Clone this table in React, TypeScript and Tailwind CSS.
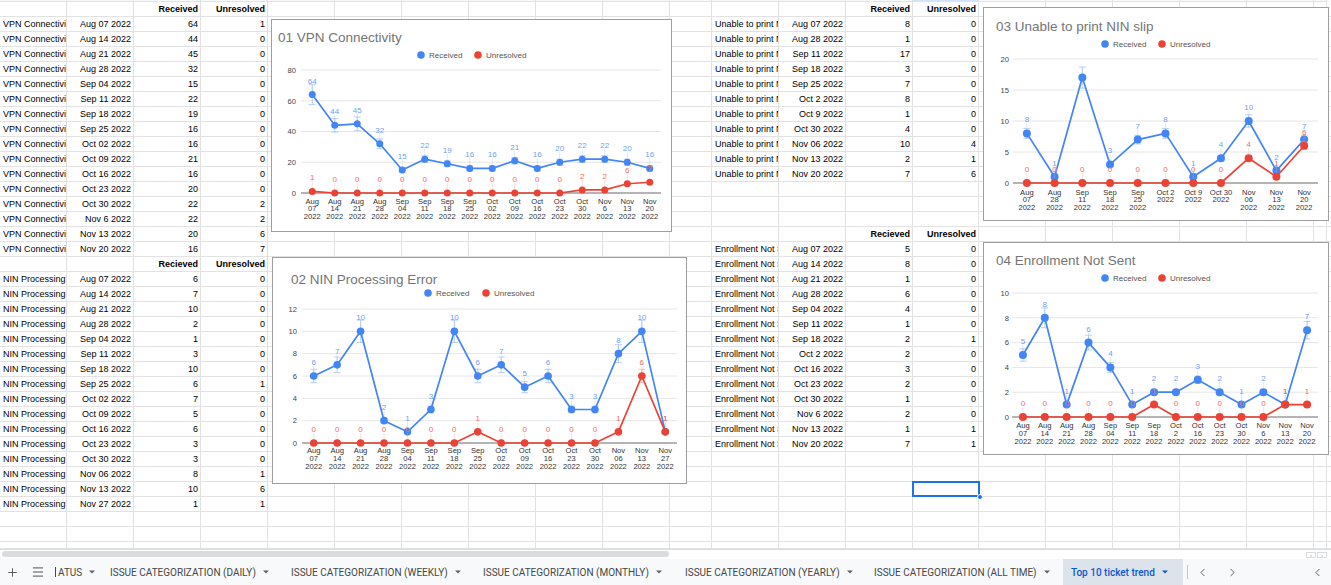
import { Plus, Menu, ChevronLeft, ChevronRight } from "lucide-react";

const COLS = [67, 67, 67, 67, 67, 67, 67, 67, 67, 67, 42, 67, 67, 67, 66, 67, 67, 67, 67, 67, 13];
const W: Record<number, string> = { 67: "w-[67px]", 42: "w-[42px]", 66: "w-[66px]", 13: "w-[13px]" };

type Cell = { t: string; a: "l" | "r"; b: boolean };

const vpn = {
  dates: ["Aug 07 2022", "Aug 14 2022", "Aug 21 2022", "Aug 28 2022", "Sep 04 2022", "Sep 11 2022", "Sep 18 2022", "Sep 25 2022", "Oct 02 2022", "Oct 09 2022", "Oct 16 2022", "Oct 23 2022", "Oct 30 2022", "Nov 6 2022", "Nov 13 2022", "Nov 20 2022"],
  rec: [64, 44, 45, 32, 15, 22, 19, 16, 16, 21, 16, 20, 22, 22, 20, 16],
  unr: [1, 0, 0, 0, 0, 0, 0, 0, 0, 0, 0, 0, 2, 2, 6, 7],
};
const nin = {
  dates: ["Aug 07 2022", "Aug 14 2022", "Aug 21 2022", "Aug 28 2022", "Sep 04 2022", "Sep 11 2022", "Sep 18 2022", "Sep 25 2022", "Oct 02 2022", "Oct 09 2022", "Oct 16 2022", "Oct 23 2022", "Oct 30 2022", "Nov 06 2022", "Nov 13 2022", "Nov 27 2022"],
  rec: [6, 7, 10, 2, 1, 3, 10, 6, 7, 5, 6, 3, 3, 8, 10, 1],
  unr: [0, 0, 0, 0, 0, 0, 0, 1, 0, 0, 0, 0, 0, 1, 6, 1],
};
const slip = {
  dates: ["Aug 07 2022", "Aug 28 2022", "Sep 11 2022", "Sep 18 2022", "Sep 25 2022", "Oct 2 2022", "Oct 9 2022", "Oct 30 2022", "Nov 06 2022", "Nov 13 2022", "Nov 20 2022"],
  rec: [8, 1, 17, 3, 7, 8, 1, 4, 10, 2, 7],
  unr: [0, 0, 0, 0, 0, 0, 0, 0, 4, 1, 6],
};
const enrol = {
  dates: ["Aug 07 2022", "Aug 14 2022", "Aug 21 2022", "Aug 28 2022", "Sep 04 2022", "Sep 11 2022", "Sep 18 2022", "Oct 2 2022", "Oct 16 2022", "Oct 23 2022", "Oct 30 2022", "Nov 6 2022", "Nov 13 2022", "Nov 20 2022"],
  rec: [5, 8, 1, 6, 4, 1, 2, 2, 3, 2, 1, 2, 1, 7],
  unr: [0, 0, 0, 0, 0, 0, 1, 0, 0, 0, 0, 0, 1, 1],
};

const cells: Record<string, Cell> = {};
const put = (r: number, c: number, t: string, a: "l" | "r" = "r", b = false) => {
  cells[`${r}-${c}`] = { t, a, b };
};
const table = (r0: number, c0: number, name: string, d: { dates: string[]; rec: number[]; unr: number[] }, head: string) => {
  put(r0 - 1, c0 + 2, head, "r", true);
  put(r0 - 1, c0 + 3, "Unresolved", "r", true);
  d.dates.forEach((date, i) => {
    put(r0 + i, c0, name, "l");
    put(r0 + i, c0 + 1, date);
    put(r0 + i, c0 + 2, String(d.rec[i]));
    put(r0 + i, c0 + 3, String(d.unr[i]));
  });
};
table(1, 0, "VPN Connectivity", vpn, "Received");
table(18, 0, "NIN Processing Error", nin, "Recieved");
table(1, 11, "Unable to print NIN slip", slip, "Received");
table(16, 11, "Enrollment Not Sent", enrol, "Recieved");

type ChartCfg = {
  w: number;
  h: number;
  title: string;
  titleX: number;
  titleY: number;
  legendY: number;
  rX: number;
  uX: number;
  x0: number;
  x1: number;
  yZero: number;
  yTop: number;
  max: number;
  step: number;
  axisX: number;
  labelYs: number[];
  cats: string[][];
  rec: number[];
  unr: number[];
  hide: number[];
  r: number;
};

const split = (d: string[]) => d.map((s) => s.split(" "));

const charts: { cfg: ChartCfg; cls: string }[] = [
  {
    cls: "left-[271px] top-[19px] w-[401px] h-[213px]",
    cfg: {
      w: 401, h: 213, title: "01 VPN Connectivity", titleX: 6, titleY: 22, legendY: 35, rX: 149, uX: 206,
      x0: 29, x1: 389, yZero: 173, yTop: 50, max: 80, step: 20, axisX: 24, labelYs: [183.7, 191.2, 198.7],
      cats: split(vpn.dates), rec: vpn.rec, unr: vpn.unr, hide: [], r: 3.5,
    },
  },
  {
    cls: "left-[272px] top-[257px] w-[415px] h-[227px]",
    cfg: {
      w: 415, h: 227, title: "02 NIN Processing Error", titleX: 18, titleY: 26, legendY: 35, rX: 155, uX: 213,
      x0: 29, x1: 404, yZero: 185, yTop: 51, max: 12, step: 2, axisX: 24, labelYs: [194.7, 202.7, 210.7],
      cats: split(nin.dates), rec: nin.rec, unr: nin.unr, hide: [], r: 3.8,
    },
  },
  {
    cls: "left-[983px] top-[7px] w-[346px] h-[214px]",
    cfg: {
      w: 346, h: 214, title: "03 Unable to print NIN slip", titleX: 12, titleY: 23, legendY: 36, rX: 121, uX: 178,
      x0: 29, x1: 334, yZero: 175, yTop: 51, max: 20, step: 5, axisX: 25, labelYs: [186.7, 193.7, 201.7],
      cats: [["Aug", "07", "2022"], ["Aug", "28", "2022"], ["Sep", "11", "2022"], ["Sep", "18", "2022"], ["Sep", "25", "2022"], ["Oct 2", "2022"], ["Oct 9", "2022"], ["Oct 30", "2022"], ["Nov", "06", "2022"], ["Nov", "13", "2022"], ["Nov", "20", "2022"]],
      rec: slip.rec, unr: slip.unr, hide: [2], r: 4,
    },
  },
  {
    cls: "left-[983px] top-[242px] w-[346px] h-[213px]",
    cfg: {
      w: 346, h: 213, title: "04 Enrollment Not Sent", titleX: 12, titleY: 22, legendY: 35, rX: 121, uX: 178,
      x0: 28, x1: 334, yZero: 174, yTop: 50, max: 10, step: 2, axisX: 25, labelYs: [184.7, 192.7, 200.7],
      cats: split(enrol.dates), rec: enrol.rec, unr: enrol.unr, hide: [], r: 4,
    },
  },
];

const FONT = "Liberation Sans, Arial, sans-serif";

function LineChart({ cfg, className }: { cfg: ChartCfg; className: string }) {
  const n = cfg.rec.length;
  const dx = (cfg.x1 - cfg.x0) / n;
  const px = (i: number) => cfg.x0 + dx * (i + 0.5);
  const py = (v: number) => cfg.yZero - (v * (cfg.yZero - cfg.yTop)) / cfg.max;
  const ticks: number[] = [];
  for (let v = 0; v <= cfg.max; v += cfg.step) ticks.push(v);

  const bars = (vals: number[], col: string) =>
    vals.map((v, i) => {
      const x = px(i);
      const y = py(v);
      const t = py(v * 1.1);
      const b = py(v * 0.9);
      return (
        <g key={i} stroke={col} strokeWidth={1}>
          <line x1={x} x2={x} y1={y - 10} y2={y - 3} opacity={0.35} />
          {v > 0 && (
            <>
              <line x1={x} x2={x} y1={t} y2={b} opacity={0.7} />
              <line x1={x - 3.5} x2={x + 3.5} y1={t} y2={t} opacity={0.7} />
              <line x1={x - 3.5} x2={x + 3.5} y1={b} y2={b} opacity={0.7} />
            </>
          )}
        </g>
      );
    });

  const line = (vals: number[], col: string) => (
    <>
      <polyline
        points={vals.map((v, i) => `${px(i)},${py(v)}`).join(" ")}
        fill="none"
        stroke={col}
        strokeWidth={1.7}
        strokeLinejoin="round"
      />
      {vals.map((v, i) => (
        <circle key={i} cx={px(i)} cy={py(v)} r={cfg.r} fill={col} />
      ))}
    </>
  );

  const labels = (vals: number[], col: string, hide: number[]) =>
    vals.map((v, i) =>
      hide.includes(i) ? null : (
        <text key={i} x={px(i)} y={py(v) - 11} textAnchor="middle" fontSize={8} fill={col}>
          {v}
        </text>
      ),
    );

  return (
    <div className={`absolute bg-white border border-[#9e9e9e] ${className}`}>
      <svg width={cfg.w - 2} height={cfg.h - 2} fontFamily={FONT} className="block">
        <text x={cfg.titleX} y={cfg.titleY} fontSize={13.5} fill="#757575">
          {cfg.title}
        </text>
        <circle cx={cfg.rX} cy={cfg.legendY} r={3.8} fill="#4285f4" />
        <text x={cfg.rX + 8} y={cfg.legendY + 2.8} fontSize={8} fill="#555">
          Received
        </text>
        <circle cx={cfg.uX} cy={cfg.legendY} r={3.8} fill="#ea4335" />
        <text x={cfg.uX + 8} y={cfg.legendY + 2.8} fontSize={8} fill="#555">
          Unresolved
        </text>
        {ticks.map((v) => (
          <g key={v}>
            {v > 0 && <line x1={cfg.x0} x2={cfg.x1} y1={py(v)} y2={py(v)} stroke="#e6e6e6" strokeWidth={1} />}
            <text x={cfg.axisX} y={py(v) + 2.8} textAnchor="end" fontSize={7.6} fill="#444">
              {v}
            </text>
          </g>
        ))}
        {cfg.cats.map((c, i) =>
          c.map((s, j) => (
            <text key={`${i}-${j}`} x={px(i)} y={cfg.labelYs[j]} textAnchor="middle" fontSize={7.6} fill="#333">
              {s}
            </text>
          )),
        )}
        {bars(cfg.rec, "#9dbdf7")}
        {line(cfg.rec, "#4285f4")}
        {bars(cfg.unr, "#f4aaa4")}
        <line x1={cfg.x0} x2={cfg.x1} y1={cfg.yZero} y2={cfg.yZero} stroke="#6b6b6b" strokeWidth={1} />
        {line(cfg.unr, "#ea4335")}
        {labels(cfg.rec, "#6ea0f5", cfg.hide)}
        {labels(cfg.unr, "#ef6c62", [])}
      </svg>
    </div>
  );
}

function GridRow({ r, h }: { r: number; h: string }) {
  return (
    <div className={`flex ${h}`}>
      {COLS.map((w, c) => {
        const cell = cells[`${r}-${c}`];
        return (
          <div
            key={c}
            className={`${W[w]} shrink-0 border-r border-b border-[#e2e2e2] overflow-hidden whitespace-nowrap leading-[14px] ${
              cell?.a === "l" ? "pl-[3px] text-left" : "pr-[2px] text-right"
            } ${cell?.b ? "font-bold" : ""}`}
          >
            {cell?.t}
          </div>
        );
      })}
      <div className="flex-1 border-b border-[#e2e2e2]" />
    </div>
  );
}

type Tab = { label: string; w: string; pl: string; active?: boolean };
const tabs: Tab[] = [
  { label: "ATUS", w: "w-[46px]", pl: "pl-[2px]" },
  { label: "ISSUE CATEGORIZATION (DAILY)", w: "w-[181px]", pl: "pl-[8px]" },
  { label: "ISSUE CATEGORIZATION (WEEKLY)", w: "w-[192px]", pl: "pl-[8px]" },
  { label: "ISSUE CATEGORIZATION (MONTHLY)", w: "w-[202px]", pl: "pl-[8px]" },
  { label: "ISSUE CATEGORIZATION (YEARLY)", w: "w-[189px]", pl: "pl-[8px]" },
  { label: "ISSUE CATEGORIZATION (ALL TIME)", w: "w-[197px]", pl: "pl-[8px]" },
  { label: "Top 10 ticket trend", w: "w-[120px]", pl: "pl-[8px]", active: true },
];

function Caret({ blue }: { blue?: boolean }) {
  return (
    <svg width="6" height="4" viewBox="0 0 6 4" className="shrink-0">
      <path d="M0 0.5h6L3 3.5z" fill={blue ? "#0b57d0" : "#5f6368"} />
    </svg>
  );
}

export default function App() {
  const rows = Array.from({ length: 36 }, (_, i) => i);
  return (
    <div className="relative w-[1331px] h-[585px] overflow-hidden bg-white font-['Liberation_Sans',Arial,sans-serif] text-[9px] text-black">
      <div className="flex h-[2px]">
        {COLS.map((w, c) => (
          <div
            key={c}
            className={`${W[w]} shrink-0 border-r border-b border-[#e2e2e2] ${c === 14 ? "bg-[#d3e3fd]" : "bg-[#f8f9fa]"}`}
          />
        ))}
        <div className="flex-1 bg-[#f8f9fa]" />
      </div>
      {rows.map((r) => (
        <GridRow key={r} r={r} h="h-[15px]" />
      ))}
      <GridRow r={99} h="h-[7px]" />

      <div className="relative h-[10px] bg-white border-t border-[#dadce0]">
        <div className="absolute left-[2px] top-[1px] w-[667px] h-[6px] rounded-full bg-[#dadce0]" />
        <div className="absolute right-[4px] top-[2px] flex gap-[1px]">
          <div className="w-[10px] h-[6px] border border-[#dadce0] flex items-center justify-center text-[6px] leading-none text-[#9aa0a6]">‹</div>
          <div className="w-[10px] h-[6px] border border-[#dadce0] flex items-center justify-center text-[6px] leading-none text-[#9aa0a6]">›</div>
        </div>
      </div>

      <div className="flex h-[26px] items-stretch bg-[#f8f9fa] font-['Roboto',Arial,sans-serif] text-[10px] text-[#444746]">
        <div className="w-[55px] shrink-0 flex items-center">
          <Plus size={13} strokeWidth={1.6} className="ml-[6px] text-[#444746]" />
          <Menu size={14} strokeWidth={1.6} className="ml-[12px] text-[#444746]" />
        </div>
        <div className="w-px bg-[#444746] my-[8px]" />
        {tabs.map((t) => (
          <div
            key={t.label}
            className={`${t.w} ${t.pl} shrink-0 flex items-center gap-[7px] whitespace-nowrap ${
              t.active ? "bg-[#dde3ea] text-[#0b57d0] font-medium" : ""
            }`}
          >
            <span>{t.label}</span>
            <Caret blue={t.active} />
          </div>
        ))}
        <div className="w-px bg-[#c4c7c5] my-[6px] ml-[4px]" />
        <div className="flex items-center ml-[8px] gap-[17px] text-[#444746]">
          <ChevronLeft size={13} strokeWidth={1.6} />
          <ChevronLeft size={13} strokeWidth={1.6} className="rotate-180" />
        </div>
        <div className="flex-1" />
        <div className="flex items-center pr-[7px] text-[#444746]">
          <ChevronRight size={13} strokeWidth={1.6} className="rotate-180" />
        </div>
      </div>

      {charts.map((c) => (
        <LineChart key={c.cfg.title} cfg={c.cfg} className={c.cls} />
      ))}

      <div className="absolute left-[912px] top-[481px] w-[68px] h-[16px] border-2 border-[#1a73e8]" />
      <div className="absolute left-[977px] top-[494px] w-[6px] h-[6px] rounded-full bg-[#1a73e8] border border-white" />
    </div>
  );
}
